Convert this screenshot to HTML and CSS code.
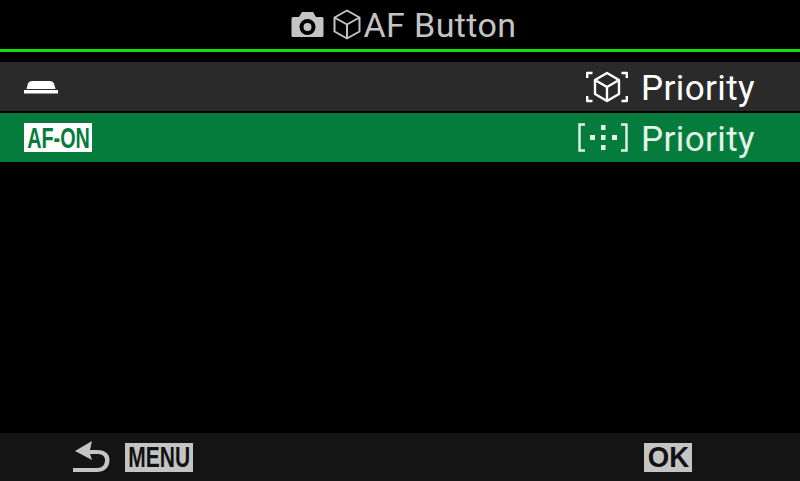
FILE: index.html

```html
<!DOCTYPE html>
<html lang="en">
<head>
  <meta charset="UTF-8">
  <title>AF Button</title>
  <meta name="viewport" content="width=device-width, initial-scale=1.0">
  <link rel="stylesheet" href="styles.css">
</head>
<body>
  <div class="screen">
    <header class="title-bar">
      <svg class="cam-icon" width="33" height="27" viewBox="0 0 33 27">
        <path fill="#c4c4c4" fill-rule="evenodd" d="M2 6h6l3-5h11l3 5h6a1.500 1.500 0 0 1 1.500 1.500v17a1.500 1.500 0 0 1-1.500 1.500H2a1.500 1.500 0 0 1-1.500-1.500v-17A1.500 1.500 0 0 1 2 6zM16.500 8a8 8 0 1 0 0 16a8 8 0 0 0 0-16zM16.500 12a4 4 0 1 1 0 8a4 4 0 0 1 0-8z"/>
      </svg>
      <svg class="cube-icon" width="28" height="31" viewBox="0 0 28 31">
        <path fill="none" stroke="#c4c4c4" stroke-width="2" stroke-linejoin="round" d="M14 1.500L26.500 8.500V22.500L14 29.500L1.500 22.500V8.500zM1.500 8.500L14 15.500L26.500 8.500M14 15.500V29.500"/>
      </svg>
      <h1>AF Button</h1>
    </header>

    <div class="menu">
      <div class="row">
        <span class="row-key">
          <svg width="34" height="14" viewBox="0 0 34 14">
            <path fill="#fff" d="M2.500 9L4 3.500Q4.800 1 8 1H26Q29.200 1 30 3.500L31.500 9z"/>
            <rect x="0" y="10" width="34" height="3.500" fill="#fff"/>
          </svg>
        </span>
        <span class="row-value">
          <svg class="mode-icon" width="42" height="32" viewBox="0 0 42 32">
            <g fill="none" stroke="#fff" stroke-width="2.400" stroke-linejoin="round">
              <path d="M1.200 7V2H6.500M35.500 2H40.800V7M1.200 25V30H6.500M35.500 30H40.800V25"/>
              <path d="M21 2L33 9V23L21 30L9 23V9zM9 9L21 16L33 9M21 16V30"/>
            </g>
          </svg>
          <span class="value-text">Priority</span>
        </span>
      </div>
      <div class="row row-active">
        <span class="row-key">
          <span class="tag tag-af"><span class="tag-text">AF-ON</span></span>
        </span>
        <span class="row-value">
          <svg class="mode-icon" width="50" height="29" viewBox="0 0 50 29">
            <path fill="none" stroke="#e2f5ea" stroke-width="2.400" d="M7 1.500H1.500V27.500H7M43 1.500H48.500V27.500H43"/>
            <g fill="#e2f5ea">
              <rect x="12" y="12" width="5" height="5"/>
              <rect x="23" y="2" width="4.500" height="5"/>
              <rect x="23" y="12" width="4.500" height="5"/>
              <rect x="23" y="22" width="4.500" height="5"/>
              <rect x="34" y="12" width="5" height="5"/>
            </g>
          </svg>
          <span class="value-text">Priority</span>
        </span>
      </div>
    </div>

    <footer class="foot">
      <div class="foot-back">
        <svg width="37" height="32" viewBox="0 0 37 32">
          <path fill="#c4c4c4" d="M19 0L2 10L19 19L17 13H24C29 13 32 15 32 19C32 24 29 27 24 27H0V31H24C31 31 36.500 27 36.500 19C36.500 12 31 9 24 9H17z"/>
        </svg>
        <span class="tag tag-menu"><span class="tag-text">MENU</span></span>
      </div>
      <span class="tag tag-ok"><span class="tag-text">OK</span></span>
    </footer>
  </div>
</body>
</html>
```

FILE: styles.css

```css
html, body {
  margin: 0;
  padding: 0;
  background: #000;
}
.screen {
  width: 800px;
  height: 481px;
  display: flex;
  flex-direction: column;
  overflow: hidden;
  font-family: Roboto, sans-serif;
  background: #000;
}
.title-bar {
  height: 49px;
  display: flex;
  align-items: center;
  justify-content: center;
  padding-left: 8px;
  border-bottom: 3px solid #14e014;
}
.title-bar h1 {
  margin: 0;
  padding-top: 2px;
  font-size: 34px;
  font-weight: 400;
  letter-spacing: 0.4px;
  color: #c4c4c4;
  line-height: 49px;
}
.cam-icon {
  margin-right: 9px;
}
.cube-icon {
  margin-right: 2px;
}
.menu {
  margin-top: 10px;
  display: flex;
  flex-direction: column;
  gap: 2px;
  flex: 1;
}
.row {
  height: 49px;
  display: flex;
  align-items: center;
  justify-content: space-between;
  padding: 0 45px 0 24px;
  background: #2a2a2a;
  color: #fff;
}
.row-active {
  background: #067c3c;
  color: #e2f5ea;
}
.row-key, .row-value {
  display: flex;
  align-items: center;
}
.mode-icon {
  margin-right: 13px;
}
.value-text {
  padding-top: 3px;
  font-size: 35px;
  letter-spacing: 0.4px;
  line-height: 49px;
}
.tag {
  display: flex;
  align-items: center;
  justify-content: center;
  height: 29px;
  background: #c4c4c4;
  color: #111;
  font-family: 'Liberation Sans', sans-serif;
  font-size: 30px;
  font-weight: 700;
}
.tag-text {
  display: block;
  flex: none;
}
.tag-af {
  width: 68px;
  background: #fff;
  color: #067c3c;
}
.tag-af .tag-text {
  transform: scaleX(0.66);
}
.tag-menu {
  width: 68px;
}
.tag-menu .tag-text {
  transform: scaleX(0.7);
}
.tag-ok {
  width: 48px;
}
.tag-ok .tag-text {
  transform: scaleX(0.92);
}
.foot {
  height: 48px;
  background: #141414;
  display: flex;
  align-items: center;
  justify-content: space-between;
  padding: 0 108px 0 73px;
}
.foot-back {
  display: flex;
  align-items: center;
  gap: 15px;
}
```
